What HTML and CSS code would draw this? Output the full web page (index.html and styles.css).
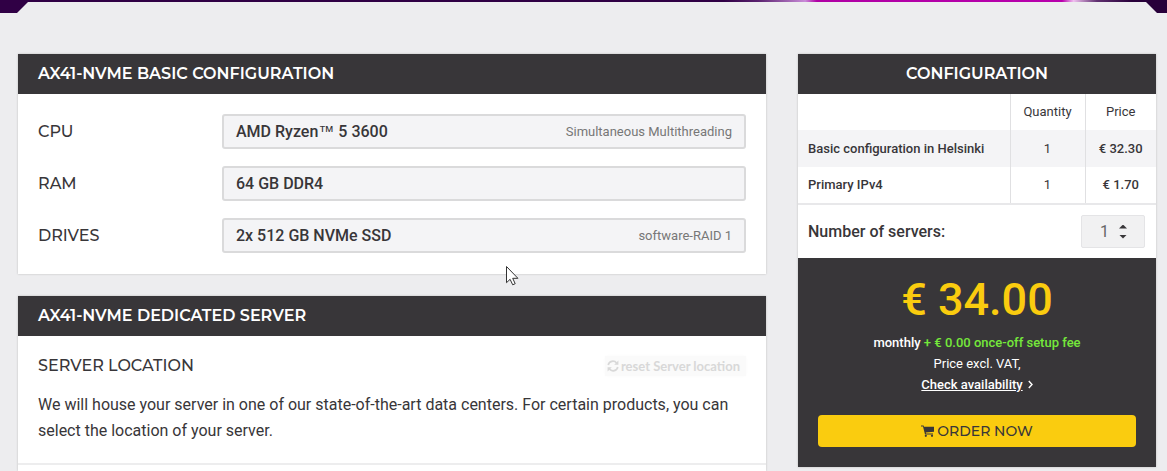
FILE: index.html
```html
<!DOCTYPE html>
<html lang="en">
<head>
<meta charset="utf-8">
<meta name="viewport" content="width=device-width, initial-scale=1">
<title>AX41-NVMe configuration</title>
<link rel="stylesheet" href="styles.css">
</head>
<body>
<div class="banner"><div class="banner-notch"></div></div>
<div class="layout">
  <main class="main">
    <section class="card">
      <h2 class="card-title">AX41-NVME BASIC CONFIGURATION</h2>
      <dl class="specs">
        <dt>CPU</dt>
        <dd><span>AMD Ryzen<span class="mark">™</span> 5 3600</span><small>Simultaneous Multithreading</small></dd>
        <dt>RAM</dt>
        <dd><span>64 GB DDR4</span></dd>
        <dt>DRIVES</dt>
        <dd><span>2x 512 GB NVMe SSD</span><small>software-RAID 1</small></dd>
      </dl>
      <svg class="pointer" viewBox="0 0 13 20" aria-hidden="true"><path d="M.5.5v16.2l3.6-3.4 2.6 5.5 2.5-1.1-2.5-5.4h5.2z" fill="#fff" stroke="#333" stroke-width="1"/></svg>
    </section>
    <section class="card">
      <h2 class="card-title">AX41-NVME DEDICATED SERVER</h2>
      <div class="location">
        <div class="location-head">
          <h3 class="location-title">SERVER LOCATION</h3>
          <button class="reset" type="button" disabled>
            <svg class="reset-icon" viewBox="0 0 12 12" aria-hidden="true"><path d="M1.2 5A4.8 4.8 0 0 1 9.6 3M10.8 7A4.8 4.8 0 0 1 2.4 9" fill="none" stroke="currentColor" stroke-width="1.7"/><path d="M11.4.6v4.2H7.2zM.6 11.4V7.2h4.2z" fill="currentColor"/></svg>
            reset Server location
          </button>
        </div>
        <p class="location-text">We will house your server in one of our state-of-the-art data centers. For certain products, you can select the location of your server.</p>
      </div>
      <div class="options"></div>
    </section>
  </main>
  <aside class="card summary">
    <h2 class="card-title centered">CONFIGURATION</h2>
    <table class="prices">
      <thead>
        <tr><td></td><th class="qty" scope="col">Quantity</th><th class="price" scope="col">Price</th></tr>
      </thead>
      <tbody>
        <tr class="shaded"><th scope="row">Basic configuration in Helsinki</th><td class="qty">1</td><td class="price">€ 32.30</td></tr>
        <tr><th scope="row">Primary IPv4</th><td class="qty">1</td><td class="price">€ 1.70</td></tr>
      </tbody>
    </table>
    <div class="servers">
      <label for="servers">Number of servers:</label>
      <div class="stepper">
        <input id="servers" class="stepper-input" type="number" value="1" min="1">
        <div class="stepper-arrows">
          <button class="step up" type="button" aria-label="Increase"></button>
          <button class="step down" type="button" aria-label="Decrease"></button>
        </div>
      </div>
    </div>
    <div class="total">
      <div class="amount">€ 34.00</div>
      <div class="note strong">monthly <span class="setup">+ € 0.00 once-off setup fee</span></div>
      <div class="note">Price excl. VAT,</div>
      <div class="note strong"><a class="availability" href="#">Check availability</a><svg class="chevron" viewBox="0 0 5 9" aria-hidden="true"><path d="M.8 1l3.2 3.5L.8 8" fill="none" stroke="currentColor" stroke-width="1.4"/></svg></div>
      <button class="order" type="button">
        <svg class="cart" viewBox="0 0 13 12" aria-hidden="true"><path d="M0 .5h2.600l.4 1.200h10v5L4.800 7.600l.2.900h7v1H4L2 1.500H0z" fill="currentColor"/><circle cx="4.800" cy="10.800" r="1.100" fill="currentColor"/><circle cx="11" cy="10.800" r="1.100" fill="currentColor"/></svg>
        ORDER NOW
      </button>
    </div>
  </aside>
</div>
</body>
</html>
```
FILE: styles.css
```css
* { box-sizing: border-box; }

body {
  margin: 0;
  background: #ededef;
  color: #383639;
  font: 16px/20px Roboto, sans-serif;
}

h2, h3, p, dl, dd { margin: 0; }

button, input { font: inherit; border: 0; padding: 0; background: none; }

.banner {
  padding: 2px 10px 0 17px;
  background: linear-gradient(90deg, #300045 0 62%, #5b2370 65%, #c98bd8 69%, #b000a4 70%, #b800ac 91%, #f0c0f0 92%, #603070 94%, #28003a 97%);
}

.banner-notch {
  height: 11px;
  background: #ededef;
  clip-path: polygon(11px 0, calc(100% - 11px) 0, 100% 100%, 0 100%);
}

.layout {
  display: grid;
  grid-template-columns: 748fr 358fr;
  gap: 32px;
  align-items: start;
  padding: 41px 11px 0 18px;
}

.main { display: grid; gap: 22px; }

.card {
  position: relative;
  background: #fff;
  box-shadow: 0 0 2px #bbb;
}

.card-title {
  padding: 0 20px;
  background: #383639;
  color: #fff;
  font: 600 16px/40px Montserrat, Inter, sans-serif;
}

.centered { text-align: center; }

.specs {
  display: grid;
  grid-template-columns: 184px 1fr;
  row-gap: 17px;
  align-items: center;
  padding: 20px 20px 21px;
}

.specs dt, .location-title { font: 500 16px/20px Montserrat, Inter, sans-serif; }

.specs dd {
  display: flex;
  justify-content: space-between;
  align-items: center;
  height: 35px;
  padding: 0 12px;
  border: 2px solid #dadadb;
  border-radius: 3px;
  background: #f4f4f6;
  font-weight: 500;
}

.specs small { color: #777; font-size: 13px; font-weight: 400; }
.mark { font-family: "Liberation Sans", sans-serif; font-weight: 400; }

.pointer {
  position: absolute;
  left: 488px;
  bottom: -12px;
  width: 13px;
  height: 20px;
}

.location { padding: 20px 20px 19px; border-bottom: 2px solid #ededee; }

.location-head { display: flex; justify-content: space-between; align-items: center; }

.reset {
  display: flex;
  align-items: center;
  gap: 2px;
  padding: 0 6px 0 2px;
  background: #fafafa;
  box-shadow: 0 0 3px #fafafa;
  color: #d8d8d8;
  font: 700 13px/20px Lato, sans-serif;
}

.reset-icon { width: 12px; height: 12px; }

.location-text { margin-top: 16px; line-height: 26px; }

.options { height: 6px; }

.prices {
  width: 100%;
  border-collapse: collapse;
  border-bottom: 2px solid #e8e8ea;
  font-size: 13px;
}

.prices th, .prices td { height: 37px; padding: 0 10px; text-align: left; font-weight: 500; }
.prices thead th, .prices thead td { height: 36px; }
.prices .shaded { background: #f4f4f6; }
.prices .qty, .prices .price { border-left: 1px solid #e0e0e2; padding: 0; text-align: center; }
.prices .qty { width: 75px; }
.prices .price { width: 71px; }
.prices thead th, .prices td.qty { font-weight: 400; }

.servers {
  display: flex;
  justify-content: space-between;
  align-items: center;
  padding: 10px 11px 10px 10px;
  font-weight: 500;
}

.stepper {
  display: flex;
  align-items: center;
  width: 64px;
  height: 33px;
  padding: 0 17px 0 8px;
  border: 1px solid #e4e4e6;
  border-radius: 2px;
  background: #f1f1f2;
}

.stepper-input {
  flex: 1;
  min-width: 0;
  width: 0;
  appearance: textfield;
  color: #666;
  font-weight: 400;
  text-align: center;
}

.stepper-input::-webkit-inner-spin-button { appearance: none; margin: 0; }
.stepper-arrows { display: grid; gap: 6px; }

.step { width: 8px; height: 4px; background: #383639; }
.up { clip-path: polygon(50% 0, 100% 100%, 0 100%); }
.down { clip-path: polygon(0 0, 100% 0, 50% 100%); }

.total {
  padding: 20px;
  background: #383639;
  color: #fff;
  text-align: center;
}

.amount {
  margin-bottom: 10px;
  color: #facc0f;
  font-size: 45px;
  font-weight: 500;
  line-height: 44px;
}

.note { font-size: 13px; line-height: 21px; }
.strong { font-weight: 500; }
.setup { color: #75e83b; }
.availability { color: inherit; text-decoration: underline; }
.chevron { width: 5px; height: 9px; margin-left: 5px; }

.order {
  display: flex;
  justify-content: center;
  align-items: center;
  gap: 3px;
  width: 100%;
  height: 32px;
  margin-top: 20px;
  border-radius: 4px;
  background: #facc0f;
  color: #383639;
  font: 500 14px/20px Montserrat, Inter, sans-serif;
}

.cart { width: 13px; height: 12px; }
```
